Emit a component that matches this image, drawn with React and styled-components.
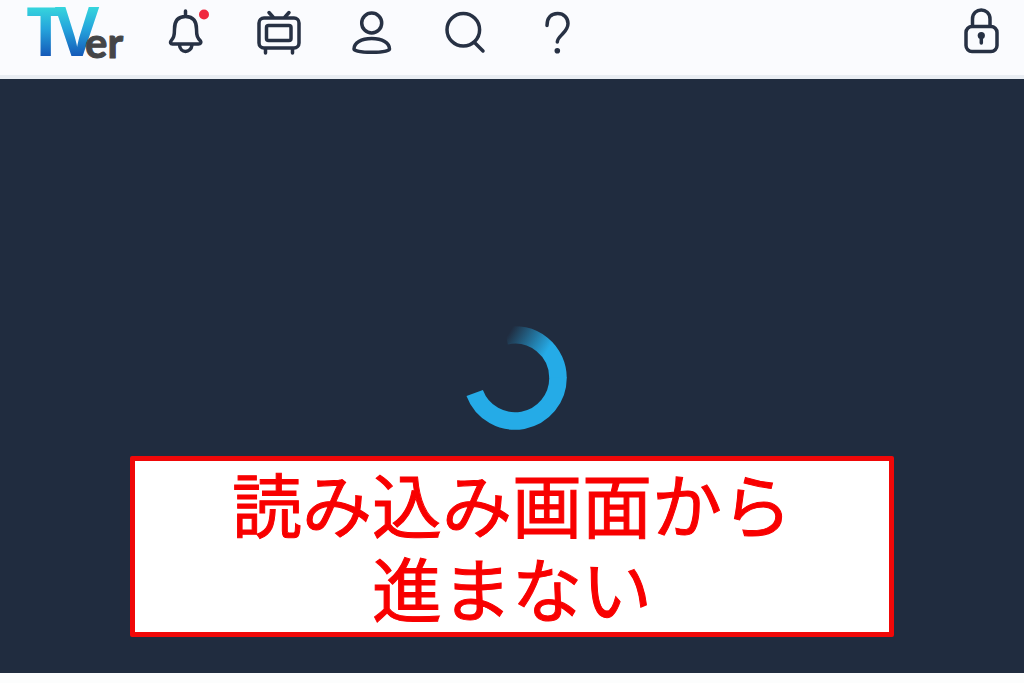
import React from "react";
import styled, { createGlobalStyle } from "styled-components";

const GlobalStyle = createGlobalStyle`
  *, *::before, *::after { box-sizing: border-box; }
  body {
    margin: 0;
    background: #fcfdfd;
    font-family: "Noto Sans CJK JP", "Noto Sans", sans-serif;
  }
`;

const Page = styled.div`
  display: flex;
  flex-direction: column;
  min-height: 100vh;
  padding-bottom: 10px;
`;

const Header = styled.header`
  display: flex;
  align-items: flex-start;
  justify-content: space-between;
  padding: 0 19px 11px 24px;
  background: #fafbfe;
  border-bottom: 4px solid #e9edf3;
`;

const Group = styled.div`
  display: flex;
  gap: 33px;
`;

const Nav = styled.nav`
  display: flex;
  gap: 45px;
`;

const LogoLink = styled.a`
  display: block;
  text-decoration: none;
`;

const LogoSvg = styled.svg`
  display: block;
  width: 104px;
  height: 64px;
  overflow: visible;
`;

const IconButton = styled.button`
  display: block;
  padding: 0;
  border: 0;
  background: none;
  cursor: pointer;
`;

const IconSvg = styled.svg`
  display: block;
  width: 48px;
  height: 64px;
  fill: none;
  stroke: #273144;
  stroke-width: 3.5;
  stroke-linecap: round;
  stroke-linejoin: round;
`;

const Stage = styled.main`
  flex: 1;
  display: flex;
  flex-direction: column;
  align-items: center;
  justify-content: flex-end;
  gap: 26px;
  padding: 40px 130px 36px;
  background: #202c3f;
`;

const Spinner = styled.svg`
  display: block;
  width: 110px;
  height: 104px;
`;

const Notice = styled.h1`
  align-self: stretch;
  margin: 0;
  padding-bottom: 3px;
  border: 5px solid #f00808;
  border-radius: 2px;
  background: #fff;
  color: #f80000;
  font-size: 70px;
  font-weight: 400;
  line-height: 84px;
  text-align: center;
  -webkit-text-stroke: 1px #f80000;
`;

function Icon({ label, children }) {
  return (
    <IconButton type="button" aria-label={label}>
      <IconSvg viewBox="0 0 48 64" aria-hidden="true">{children}</IconSvg>
    </IconButton>
  );
}

function Logo() {
  return (
    <LogoLink href="#" aria-label="TVer">
      <LogoSvg viewBox="0 0 104 64">
        <defs>
          <linearGradient id="brand" gradientUnits="userSpaceOnUse" x1="0" y1="7" x2="0" y2="56">
            <stop offset="0" stopColor="#36d6dd" />
            <stop offset="0.45" stopColor="#25a4dc" />
            <stop offset="1" stopColor="#1459b8" />
          </linearGradient>
        </defs>
        <g fill="url(#brand)" fontFamily="Open Sans" fontSize="68" fontWeight="700">
          <text x="2" y="56">T</text>
          <text x="31" y="56">V</text>
        </g>
        <text x="61" y="58" fill="#454547" stroke="#454547" strokeWidth="1" strokeLinejoin="round" fontFamily="Lato" fontSize="42" fontWeight="700">er</text>
      </LogoSvg>
    </LogoLink>
  );
}

export default function App() {
  return (
    <>
      <GlobalStyle />
      <Page>
        <Header>
          <Group>
            <Logo />
            <Nav>
              <Icon label="お知らせ">
                <path d="M24.5 11v5M24.5 16.5C16 16.5 13.5 22 13.5 29C13.5 36 12.5 38 10 41C9 42.5 9.5 44 11.5 44H37.5C39.5 44 40.5 42.5 39.5 41C36.5 38 35.5 36 35.5 29C35.5 22 33 16.5 24.5 16.5ZM18.5 45C19 53.5 30 53.5 31 45" />
                <circle cx="43" cy="14.5" r="5" fill="#f0283f" stroke="none" />
              </Icon>
              <Icon label="番組">
                <rect x="5" y="18" width="40" height="30" rx="5" />
                <rect x="12.5" y="25.5" width="24.5" height="15" rx="2" />
                <path d="M15 12.5L19 17M35 12.5L31 17M11.5 49v4M38.5 49v4" />
              </Icon>
              <Icon label="マイページ">
                <circle cx="24.7" cy="23" r="10" />
                <path d="M7 49C7 43 14 38.5 24.7 38.5S42.5 43 42.5 49C42.5 51 35 52.3 24.7 52.3S7 51 7 49Z" />
              </Icon>
              <Icon label="検索">
                <circle cx="23.3" cy="29.7" r="16.3" />
                <path d="M34.5 42.5L43 51" />
              </Icon>
              <Icon label="ヘルプ">
                <path d="M14 25.5C14 18 18 13.5 24.7 13.5C31 13.5 35 18 35 23.5C35 28 33 30.5 29.5 34C26 37.5 24.3 39 24.3 42" />
                <circle cx="24.3" cy="50.7" r="2.8" fill="#273144" stroke="none" />
              </Icon>
            </Nav>
          </Group>
          <Icon label="ロック">
            <rect x="9" y="26.5" width="31" height="25" rx="6" />
            <path d="M15.5 26V19C15.5 7 33 7 33 19V26" />
            <circle cx="24.3" cy="35.5" r="3.6" fill="#273144" stroke="none" />
            <path d="M24.3 36v7" />
          </Icon>
        </Header>
        <Stage>
          <Spinner viewBox="0 0 110 104" role="img" aria-label="読み込み中">
            <defs>
              <linearGradient id="tail" gradientUnits="userSpaceOnUse" x1="50" y1="10" x2="86" y2="32">
                <stop offset="0" stopColor="#25abe7" stopOpacity="0" />
                <stop offset="1" stopColor="#25abe7" />
              </linearGradient>
            </defs>
            <path d="M49 9.9A43 43 0 0 1 101 52" fill="none" stroke="url(#tail)" strokeWidth="17.5" />
            <path d="M101 51.5A43 43 0 0 1 17.7 67" fill="none" stroke="#25abe7" strokeWidth="17.5" />
          </Spinner>
          <Notice>
            読み込み画面から
            <br />
            進まない
          </Notice>
        </Stage>
      </Page>
    </>
  );
}
